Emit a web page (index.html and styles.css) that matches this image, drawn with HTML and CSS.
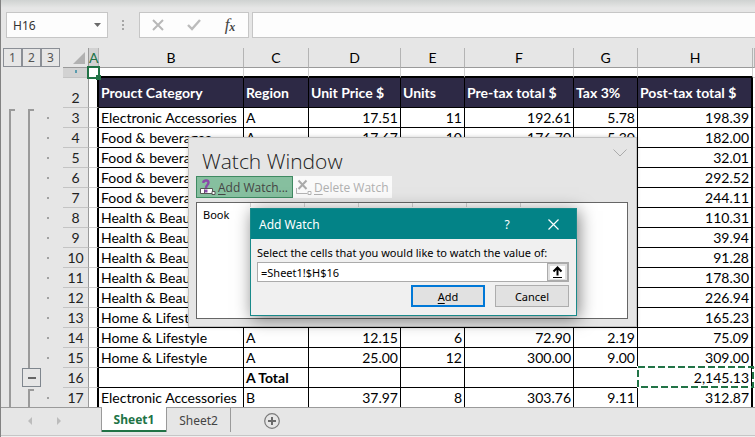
FILE: index.html
```html
<!DOCTYPE html>
<html lang="en">
<head>
<meta charset="utf-8">
<title>Sheet1</title>
<link rel="stylesheet" href="styles.css">
</head>
<body>
<header class="formula-bar">
  <div class="name-box">
    <input class="name-input" type="text" value="H16" aria-label="Name box">
    <button class="name-drop" type="button" aria-label="Open name list"><svg width="7" height="4" viewBox="0 0 7 4"><path d="M0 0h7L3.5 4z" fill="#6a6a6a"/></svg></button>
  </div>
  <svg class="grip" width="2" height="10" viewBox="0 0 2 10"><path d="M0 0h2v2H0zM0 4h2v2H0zM0 8h2v2H0z" fill="#a6a6a6"/></svg>
  <div class="fx-tools">
    <button type="button" aria-label="Cancel entry"><svg width="12" height="12" viewBox="0 0 12 12"><path d="M1 1l10 10M11 1L1 11" stroke="#b8b8b8" stroke-width="2"/></svg></button>
    <button type="button" aria-label="Enter"><svg width="14" height="12" viewBox="0 0 14 12"><path d="M1 6l4 4 8-9" fill="none" stroke="#bcbcbc" stroke-width="2.4"/></svg></button>
    <button class="fx" type="button" aria-label="Insert function"><i>f</i><sub>x</sub></button>
  </div>
  <input class="formula-input" type="text" aria-label="Formula">
</header>

<main class="sheet">
  <aside class="outline">
    <div class="levels">
      <button type="button">1</button><button type="button">2</button><button type="button">3</button>
    </div>
    <div class="groups">
      <div class="group"><div class="bracket grow"></div></div>
      <div class="group">
        <div class="bracket long"></div>
        <button class="collapse" type="button" aria-label="Collapse group"></button>
        <div class="bracket stub"></div>
      </div>
      <div class="dots">
        <span></span><span></span><span></span><span></span><span></span><span></span><span></span><span></span><span></span><span></span><span></span><span></span><span></span><span class="none"></span><span></span>
      </div>
    </div>
  </aside>

  <table class="grid">
    <colgroup><col class="c-row"><col class="c-a"><col class="c-b"><col class="c-c"><col class="c-d"><col class="c-e"><col class="c-f"><col class="c-g"><col class="c-h"><col></colgroup>
    <thead>
      <tr><th class="corner"><svg width="12" height="12" viewBox="0 0 12 12"><path d="M12 0v12H0z" fill="#b1b1b1"/></svg></th><th class="picked">A</th><th>B</th><th>C</th><th>D</th><th>E</th><th>F</th><th>G</th><th>H</th><th></th></tr>
    </thead>
    <tbody>
      <tr class="first"><th><span class="cut"></span></th><td class="a"><span class="active-cell"></span></td><td></td><td></td><td></td><td></td><td></td><td></td><td></td><td></td></tr>
      <tr class="titles"><th>2</th><td class="a"></td><td>Prouct Category</td><td>Region</td><td>Unit Price $</td><td>Units</td><td>Pre-tax total $</td><td>Tax 3%</td><td class="h">Post-tax total $</td><td class="x"></td></tr>
      <tr><th>3</th><td class="a"></td><td>Electronic Accessories</td><td>A</td><td class="n">17.51</td><td class="n">11</td><td class="n">192.61</td><td class="n">5.78</td><td class="n h">198.39</td><td class="x"></td></tr>
      <tr><th>4</th><td class="a"></td><td>Food &amp; beverages</td><td>A</td><td class="n">17.67</td><td class="n">10</td><td class="n">176.70</td><td class="n">5.30</td><td class="n h">182.00</td><td class="x"></td></tr>
      <tr><th>5</th><td class="a"></td><td>Food &amp; beverages</td><td></td><td></td><td></td><td></td><td></td><td class="n h">32.01</td><td class="x"></td></tr>
      <tr><th>6</th><td class="a"></td><td>Food &amp; beverages</td><td></td><td></td><td></td><td></td><td></td><td class="n h">292.52</td><td class="x"></td></tr>
      <tr><th>7</th><td class="a"></td><td>Food &amp; beverages</td><td></td><td></td><td></td><td></td><td></td><td class="n h">244.11</td><td class="x"></td></tr>
      <tr><th>8</th><td class="a"></td><td>Health &amp; Beauty</td><td></td><td></td><td></td><td></td><td></td><td class="n h">110.31</td><td class="x"></td></tr>
      <tr><th>9</th><td class="a"></td><td>Health &amp; Beauty</td><td></td><td></td><td></td><td></td><td></td><td class="n h">39.94</td><td class="x"></td></tr>
      <tr><th>10</th><td class="a"></td><td>Health &amp; Beauty</td><td></td><td></td><td></td><td></td><td></td><td class="n h">91.28</td><td class="x"></td></tr>
      <tr><th>11</th><td class="a"></td><td>Health &amp; Beauty</td><td></td><td></td><td></td><td></td><td></td><td class="n h">178.30</td><td class="x"></td></tr>
      <tr><th>12</th><td class="a"></td><td>Health &amp; Beauty</td><td></td><td></td><td></td><td></td><td></td><td class="n h">226.94</td><td class="x"></td></tr>
      <tr><th>13</th><td class="a"></td><td>Home &amp; Lifestyle</td><td></td><td></td><td></td><td></td><td></td><td class="n h">165.23</td><td class="x"></td></tr>
      <tr><th>14</th><td class="a"></td><td>Home &amp; Lifestyle</td><td>A</td><td class="n">12.15</td><td class="n">6</td><td class="n">72.90</td><td class="n">2.19</td><td class="n h">75.09</td><td class="x"></td></tr>
      <tr><th>15</th><td class="a"></td><td>Home &amp; Lifestyle</td><td>A</td><td class="n">25.00</td><td class="n">12</td><td class="n">300.00</td><td class="n">9.00</td><td class="n h">309.00</td><td class="x"></td></tr>
      <tr><th>16</th><td class="a"></td><td></td><td><b>A Total</b></td><td></td><td></td><td></td><td></td><td class="n h target">2,145.13<svg class="ants" aria-hidden="true"><rect x="1" y="1" width="115" height="20" fill="none" stroke="#fff" stroke-width="2"/><rect x="1" y="1" width="115" height="20" fill="none" stroke="#217346" stroke-width="2" stroke-dasharray="7 3"/></svg></td><td class="x"></td></tr>
      <tr><th>17</th><td class="a"></td><td>Electronic Accessories</td><td>B</td><td class="n">37.97</td><td class="n">8</td><td class="n">303.76</td><td class="n">9.11</td><td class="n h">312.87</td><td class="x"></td></tr>
    </tbody>
  </table>
</main>

<footer class="tabs">
  <div class="tab-nav">
    <button type="button" aria-label="Previous sheets"><svg width="4" height="8" viewBox="0 0 4 8"><path d="M4 0v8L0 4z" fill="#bcbcbc"/></svg></button>
    <button type="button" aria-label="Next sheets"><svg width="4" height="8" viewBox="0 0 4 8"><path d="M0 0v8l4-4z" fill="#bcbcbc"/></svg></button>
  </div>
  <button class="tab current" type="button">Sheet1</button>
  <button class="tab" type="button">Sheet2</button>
  <button class="add-sheet" type="button" aria-label="New sheet"><svg width="16" height="16" viewBox="0 0 16 16"><circle cx="8" cy="8" r="7.3" fill="none" stroke="#7a7a7a" stroke-width="1.2"/><path d="M4 8h8M8 4v8" stroke="#6a6a6a" stroke-width="2"/></svg></button>
</footer>

<section class="watch" aria-label="Watch Window">
  <div class="watch-head">
    <h2>Watch Window</h2>
    <button type="button" aria-label="Window options"><svg width="14" height="8" viewBox="0 0 14 8"><path d="M.5.5L7 7 13.500.5" fill="none" stroke="#ababab"/></svg></button>
  </div>
  <div class="watch-tools">
    <button class="tool add" type="button">
      <svg width="17" height="17" viewBox="0 0 17 17"><path d="M1.500 9.500h12v5h-12zM5.500 10.500v4" fill="#fff" stroke="#555"/><path d="M13 12.500h3v3h-3z" fill="#fff" stroke="#555"/><path d="M4.500 4V2.500C5.500 1 9.500 1 9.500 3.500 9.500 6 7 6 7 9" fill="none" stroke="#8a4ba8" stroke-width="2.400"/><path d="M5.500 10.500h3v3h-3z" fill="#8a4ba8"/></svg>
      <span><u>A</u>dd Watch...</span></button>
    <button class="tool" type="button" disabled>
      <svg width="17" height="17" viewBox="0 0 17 17"><path d="M1.500 9v5.500h11M1.500 14.500V10" fill="none" stroke="#b4b4b4"/><path d="M3.500 1.500l8 8.500M11.500 1.500l-8 8.500" stroke="#aaa" stroke-width="2"/><path d="M13 12.500h3v3h-3z" fill="#fff" stroke="#b4b4b4"/></svg>
      <span><u>D</u>elete Watch</span></button>
  </div>
  <div class="watch-list">
    <div class="watch-cols"><span></span><span></span><span></span><span></span><span></span><span></span></div>
    <div class="watch-book">Book</div>
  </div>
</section>

<section class="dialog" role="dialog" aria-labelledby="dialog-title">
  <div class="dialog-bar">
    <h3 id="dialog-title">Add Watch</h3>
    <button type="button">?</button>
    <button type="button" aria-label="Close"><svg width="11" height="11" viewBox="0 0 11 11"><path d="M.5.5l10 10M10.500.5l-10 10" stroke="#fff" stroke-width="1.200"/></svg></button>
  </div>
  <div class="dialog-body">
    <label for="watch-ref">Select the cells that you would like to watch the value of:</label>
    <div class="ref">
      <input id="watch-ref" type="text" value="=Sheet1!$H$16">
      <button type="button" aria-label="Collapse dialog"><svg width="15" height="13" viewBox="0 0 15 13"><path d="M0 0h15v13H0z" fill="#fff"/><path d="M3.500 5.500l4-4 4 4M7.500 2v7.500" fill="none" stroke="#000" stroke-width="2"/><path d="M3 11.500h9" stroke="#000"/></svg></button>
    </div>
    <div class="dialog-actions">
      <button class="primary" type="button"><u>A</u>dd</button>
      <button type="button">Cancel</button>
    </div>
  </div>
</section>
</body>
</html>
```
FILE: styles.css
```css
* { box-sizing: border-box; }
body {
  margin: 0;
  height: 100vh;
  display: flex;
  flex-direction: column;
  overflow: hidden;
  position: relative;
  background: #e6e6e6;
  border-left: 1px solid #828282;
  color: #000;
  font-family: "Noto Sans", "Open Sans", sans-serif;
  font-size: 11px;
}
button, input { font: inherit; color: inherit; margin: 0; padding: 0; border-radius: 0; }
button { border: 0; background: none; display: flex; align-items: center; justify-content: center; }
h2, h3 { margin: 0; font-weight: 400; }

/* formula bar */
.formula-bar {
  display: flex;
  flex: none;
  align-items: center;
  height: 48px;
  padding: 12px 0 10px 5px;
  background: linear-gradient(#cfd2d1, #e6e6e6 8px);
}
.name-box, .fx-tools, .formula-input { height: 26px; border: 1px solid #c6c6c6; background: #fdfdfd; }
.name-box { display: flex; width: 102px; }
.name-input { flex: 1; min-width: 0; border: 0; background: none; padding-left: 6px; font-size: 12px; color: #333; }
.name-drop { width: 20px; }
.grip { margin: 0 15px 0 14px; }
.fx-tools { display: flex; width: 110px; margin-right: 3px; }
.fx-tools button { flex: 1; }
.fx { font-family: "Liberation Serif", serif; font-size: 17px; color: #444; }
.fx sub { font-size: 12px; font-style: italic; font-weight: 700; align-self: center; margin-top: 4px; }
.formula-input { flex: 1; min-width: 0; border-right: 0; }

/* outline gutter */
.sheet { display: flex; flex: 1; min-height: 0; overflow: hidden; }
.outline { width: 62px; flex: none; display: flex; flex-direction: column; padding-left: 2px; }
.levels { display: flex; margin-bottom: 42px; }
.levels button { width: 19px; height: 19px; border: 1px solid #8b8f96; color: #555; font-size: 12px; }
.groups { display: flex; flex: 1; }
.group { width: 19px; display: flex; flex-direction: column; padding-left: 6px; }
.bracket { width: 6px; border: solid #9a9a9a; border-width: 2px 0 0 2px; }
.grow { flex: 1; }
.long { height: 259px; }
.stub { flex: 1; margin-top: 2px; }
.collapse { width: 19px; height: 19px; margin-left: -6px; border: 1px solid #7f868e; flex: none; }
.collapse::before { content: ""; width: 8px; height: 2px; background: #666; }
.dots { width: 14px; display: flex; flex-direction: column; align-items: center; height: 300px; }
.dots span { height: 20px; display: flex; align-items: center; }
.dots span::before { content: ""; width: 2px; height: 2px; background: #a0a0a0; margin-top: -2px; }
.dots .none::before { background: none; }

/* cells */
.grid {
  flex: 1;
  min-width: 0;
  table-layout: fixed;
  width: 100%;
  border-spacing: 0;
  font-family: Lato, "Noto Sans", sans-serif;
  font-size: 14px;
  line-height: 18px;
  align-self: flex-start;
}
.c-row { width: 26px; } .c-a { width: 10px; } .c-b { width: 145px; }
.c-c { width: 65px; } .c-d { width: 92px; } .c-e { width: 64px; }
.c-f { width: 109px; } .c-g { width: 64px; } .c-h { width: 115px; }
.grid th { font-weight: 400; padding: 0; }
.grid td { padding: 1px 2px 0; height: 20px; background: #fff; border: solid #000; border-width: 0 1px 1px 0; white-space: nowrap; overflow: hidden; }
thead th { height: 20px; border-right: 1px solid #b4b4b4; border-bottom: 1px solid #9a9a9a; }
thead .corner { border-right-color: #9a9a9a; line-height: 0; text-align: right; padding-right: 3px; vertical-align: bottom; padding-bottom: 3px; }
thead .picked { background: #d2d2d2; color: #217346; }
tbody th { border-right: 1px solid #9a9a9a; border-bottom: 1px solid #c4c4c4; color: #222; vertical-align: bottom; }
.grid td.a { border-right: 2px solid #000; border-bottom-color: #d0d0d0; padding: 0; }
.grid td.h { border-right-width: 2px; }
.grid td.x { border-right: 0; border-bottom-color: #d0d0d0; padding: 0; }
.grid .n { text-align: right; }
.grid .first td { height: 10px; padding: 0; border-right-color: #d0d0d0; border-bottom: 2px solid #000; line-height: 0; }
.grid .first .a { position: relative; overflow: visible; border: 0; }
.grid .first td:last-child { border-color: #d0d0d0; border-width: 0 0 1px; }
.first th { background: #d2d2d2; line-height: 0; vertical-align: top; }
.cut { display: inline-block; width: 2px; height: 3px; background: #5a9cae; }
.active-cell { position: absolute; left: -2px; top: -2px; width: 13px; height: 13px; border: 2px solid #217346; background: #fff; }
.active-cell::after { content: ""; position: absolute; right: -3px; bottom: -3px; width: 5px; height: 5px; background: #217346; }
.grid .titles td { height: 30px; padding-top: 0; font-weight: 700; }
.grid .titles td:not(.a):not(.x) { background: #2d2945; color: #fff; }
.grid .target { position: relative; overflow: visible; }
.ants { position: absolute; left: -1px; top: -2px; width: 117px; height: 22px; }

/* sheet tabs */
.tabs { display: flex; flex: none; height: 30px; border-top: 1px solid #9a9a9a; box-shadow: inset 0 -1px #f0f0f0, inset 0 -2px #c6c6c6; font-size: 12px; }
.tab-nav { width: 100px; display: flex; align-items: center; padding-left: 27px; gap: 25px; height: 26px; }
.tab { width: 64px; height: 24px; color: #444; border-right: 1px solid #9a9a9a; }
.tab.current { width: 66px; height: 25px; margin-top: -1px; background: #fff; border: solid #9a9a9a; border-width: 0 1px 0; box-shadow: inset 0 -2px #217346; color: #217346; font-weight: 700; }
.add-sheet { width: 16px; height: 26px; margin-left: 33px; }

/* watch window */
.watch { position: absolute; left: 187px; top: 137px; width: 449px; height: 190px; padding: 0 8px 7px 7px; display: flex; flex-direction: column; background: #e5e5e5; border: 1px solid #c2c2c2; box-shadow: 0 0 4px rgba(0,0,0,.2); }
.watch-head { display: flex; justify-content: space-between; padding: 8px 1px 0 6px; height: 38px; }
.watch-head h2 { font-family: "Open Sans", "Noto Sans", sans-serif; font-weight: 300; font-size: 21px; line-height: 30px; color: #222; }
.watch-head button { height: 14px; }
.watch-tools { display: flex; height: 22px; margin-bottom: 4px; font-family: "Open Sans", "Noto Sans", sans-serif; font-size: 12px; }
.tool { width: 99px; gap: 2px; justify-content: flex-start; padding-left: 2px; background: #fafafa; color: #b0b0b0; white-space: nowrap; }
.tool.add { width: 97px; background: #86bf9f; border: 1px solid #3f8a62; color: #444; }
.watch-list { flex: 1; background: #fff; border: 1px solid #666; }
.watch-cols { display: flex; height: 4px; }
.watch-cols span { width: 54px; border-right: 1px solid #d6d6d6; }
.watch-book { padding: 0 6px; line-height: 15px; }

/* add watch dialog */
.dialog { position: absolute; left: 249px; top: 208px; width: 327px; background: #f0f0f0; border: 1px solid #198a8a; box-shadow: 2px 3px 16px rgba(0,0,0,.5); }
.dialog-bar { display: flex; align-items: center; height: 30px; padding-left: 8px; background: #038387; color: #fff; }
.dialog-bar h3 { flex: 1; font-size: 12px; }
.dialog-bar button { width: 46px; font-size: 12px; }
.dialog-body { padding: 6px 7px 8px 6px; }
.dialog-body label { display: block; line-height: 16px; }
.ref { display: flex; height: 20px; margin-top: 1px; }
.ref input { flex: 1; min-width: 0; border: 1px solid #ababab; background: #fff; padding-left: 3px; }
.ref button { width: 21px; background: #e1e1e1; border: 2px solid #ababab; border-left: 0; }
.dialog-actions { display: flex; justify-content: flex-end; gap: 10px; margin-top: 3px; }
.dialog-actions button { width: 74px; height: 22px; background: #e1e1e1; border: 1px solid #adadad; }
.dialog-actions .primary { border: 2px solid #0078d7; }
u { text-underline-offset: 2px; }
```
